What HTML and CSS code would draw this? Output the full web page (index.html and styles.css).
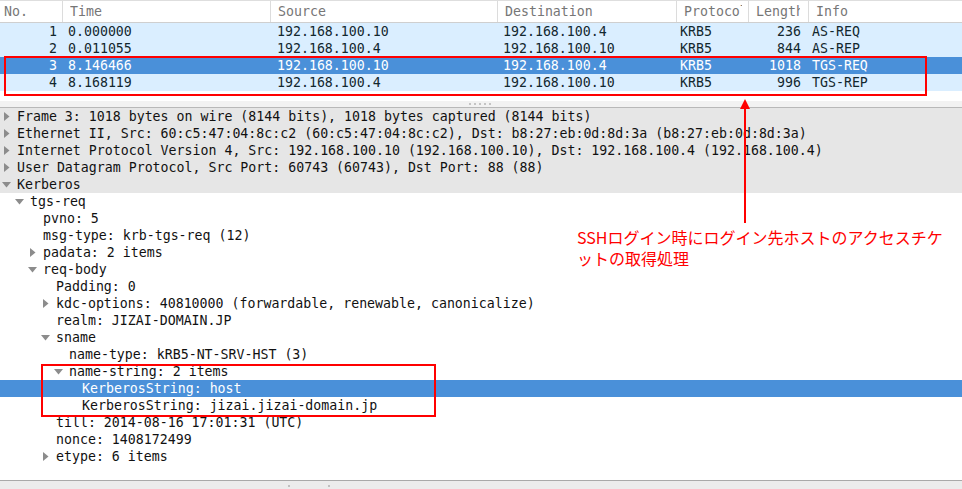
FILE: index.html
```html
<!DOCTYPE html>
<html lang="ja">
<head>
<meta charset="utf-8">
<title>Wireshark</title>
<link rel="stylesheet" href="styles.css">
</head>
<body>
<div class="app">
  <section class="plist">
    <div class="prow phead">
      <div class="c c-no"><span class="hl">No.</span></div>
      <div class="c c-time"><span class="hl">Time</span></div>
      <div class="c c-src"><span class="hl">Source</span></div>
      <div class="c c-dst"><span class="hl">Destination</span></div>
      <div class="c c-proto"><span class="hl">Protocol</span></div>
      <div class="c c-len"><span class="hl">Length</span></div>
      <div class="c c-info"><span class="hl">Info</span></div>
    </div>
    <div class="prow pdata">
      <div class="c c-no">1</div><div class="c c-time">0.000000</div><div class="c c-src">192.168.100.10</div><div class="c c-dst">192.168.100.4</div><div class="c c-proto">KRB5</div><div class="c c-len">236</div><div class="c c-info">AS-REQ</div>
    </div>
    <div class="prow pdata">
      <div class="c c-no">2</div><div class="c c-time">0.011055</div><div class="c c-src">192.168.100.4</div><div class="c c-dst">192.168.100.10</div><div class="c c-proto">KRB5</div><div class="c c-len">844</div><div class="c c-info">AS-REP</div>
    </div>
    <div class="prow pdata sel">
      <div class="c c-no">3</div><div class="c c-time">8.146466</div><div class="c c-src">192.168.100.10</div><div class="c c-dst">192.168.100.4</div><div class="c c-proto">KRB5</div><div class="c c-len">1018</div><div class="c c-info">TGS-REQ</div>
    </div>
    <div class="prow pdata">
      <div class="c c-no">4</div><div class="c c-time">8.168119</div><div class="c c-src">192.168.100.4</div><div class="c c-dst">192.168.100.10</div><div class="c c-proto">KRB5</div><div class="c c-len">996</div><div class="c c-info">TGS-REP</div>
    </div>
    <div class="pfill"></div>
  </section>

  <div class="splitter"><span class="grip"></span></div>

  <section class="tree">
    <div class="tr top l0"><span class="ex"><svg class="tri-r" viewBox="0 0 6 9"><polygon points="0,0 5.5,4.5 0,9"/></svg></span>Frame 3: 1018 bytes on wire (8144 bits), 1018 bytes captured (8144 bits)</div>
    <div class="tr top l0"><span class="ex"><svg class="tri-r" viewBox="0 0 6 9"><polygon points="0,0 5.5,4.5 0,9"/></svg></span>Ethernet II, Src: 60:c5:47:04:8c:c2 (60:c5:47:04:8c:c2), Dst: b8:27:eb:0d:8d:3a (b8:27:eb:0d:8d:3a)</div>
    <div class="tr top l0"><span class="ex"><svg class="tri-r" viewBox="0 0 6 9"><polygon points="0,0 5.5,4.5 0,9"/></svg></span>Internet Protocol Version 4, Src: 192.168.100.10 (192.168.100.10), Dst: 192.168.100.4 (192.168.100.4)</div>
    <div class="tr top l0"><span class="ex"><svg class="tri-r" viewBox="0 0 6 9"><polygon points="0,0 5.5,4.5 0,9"/></svg></span>User Datagram Protocol, Src Port: 60743 (60743), Dst Port: 88 (88)</div>
    <div class="tr top l0"><span class="ex"><svg class="tri-d" viewBox="0 0 9 6"><polygon points="0,0 9,0 4.5,5.5"/></svg></span>Kerberos</div>
    <div class="tr l1"><span class="ex"><svg class="tri-d" viewBox="0 0 9 6"><polygon points="0,0 9,0 4.5,5.5"/></svg></span>tgs-req</div>
    <div class="tr l2"><span class="ex"></span>pvno: 5</div>
    <div class="tr l2"><span class="ex"></span>msg-type: krb-tgs-req (12)</div>
    <div class="tr l2"><span class="ex"><svg class="tri-r" viewBox="0 0 6 9"><polygon points="0,0 5.5,4.5 0,9"/></svg></span>padata: 2 items</div>
    <div class="tr l2"><span class="ex"><svg class="tri-d" viewBox="0 0 9 6"><polygon points="0,0 9,0 4.5,5.5"/></svg></span>req-body</div>
    <div class="tr l3"><span class="ex"></span>Padding: 0</div>
    <div class="tr l3"><span class="ex"><svg class="tri-r" viewBox="0 0 6 9"><polygon points="0,0 5.5,4.5 0,9"/></svg></span>kdc-options: 40810000 (forwardable, renewable, canonicalize)</div>
    <div class="tr l3"><span class="ex"></span>realm: JIZAI-DOMAIN.JP</div>
    <div class="tr l3"><span class="ex"><svg class="tri-d" viewBox="0 0 9 6"><polygon points="0,0 9,0 4.5,5.5"/></svg></span>sname</div>
    <div class="tr l4"><span class="ex"></span>name-type: kRB5-NT-SRV-HST (3)</div>
    <div class="tr l4"><span class="ex"><svg class="tri-d" viewBox="0 0 9 6"><polygon points="0,0 9,0 4.5,5.5"/></svg></span>name-string: 2 items</div>
    <div class="tr l5 sel"><span class="ex"></span>KerberosString: host</div>
    <div class="tr l5"><span class="ex"></span>KerberosString: jizai.jizai-domain.jp</div>
    <div class="tr l3"><span class="ex"></span>till: 2014-08-16 17:01:31 (UTC)</div>
    <div class="tr l3"><span class="ex"></span>nonce: 1408172499</div>
    <div class="tr l3"><span class="ex"><svg class="tri-r" viewBox="0 0 6 9"><polygon points="0,0 5.5,4.5 0,9"/></svg></span>etype: 6 items</div>
  </section>

  <div class="bottombar"><span class="dot"></span><span class="dot"></span></div>

  <div class="mark mark-rows"></div>
  <div class="mark mark-names"></div>
  <svg class="arrow" viewBox="0 0 12 124" width="12" height="124">
    <polygon points="6,0 11,10 1,10" fill="#ff0000"/>
    <rect x="5" y="8" width="2" height="116" fill="#ff0000"/>
  </svg>
  <p class="note">SSHログイン時にログイン先ホストのアクセスチケ<br>ットの取得処理</p>
</div>
</body>
</html>
```

FILE: styles.css
```css
html, body {
  margin: 0;
  padding: 0;
  background: #ffffff;
}
body {
  font-family: "DejaVu Sans Mono", "Liberation Mono", monospace;
  font-size: 13.25px;
  color: #12272e;
  width: 962px;
  height: 489px;
  overflow: hidden;
}
.app {
  position: relative;
  width: 962px;
  height: 489px;
  display: flex;
  flex-direction: column;
}

/* packet list */
.plist {
  display: flex;
  flex-direction: column;
}
.prow {
  display: grid;
  grid-template-columns: 62px 208px 227px 179px 72px 60px 1fr;
  white-space: nowrap;
}
.phead {
  height: 21px;
  line-height: 21px;
  border-top: 1px solid #dedede;
  border-bottom: 1px solid #cfcfcf;
  color: #767676;
  background: #ffffff;
}
.phead .c {
  border-left: 1px solid #dcdcdc;
  padding-left: 7px;
  overflow: hidden;
}
.phead .c-no {
  border-left: none;
  padding-left: 4px;
}
.phead .hl {
  display: block;
  overflow: hidden;
}
.phead .c-proto .hl { width: 58px; }
.phead .c-len .hl { width: 44px; }

.pdata {
  height: 17px;
  line-height: 17px;
  background: #daeeff;
}
.pdata.sel {
  background: #4a90d9;
  color: #ffffff;
}
.pdata .c { overflow: hidden; }
.pdata .c-no { text-align: right; padding-right: 5px; }
.pdata .c-time { padding-left: 6px; }
.pdata .c-src { padding-left: 7px; }
.pdata .c-dst { padding-left: 6px; }
.pdata .c-proto { padding-left: 4px; }
.pdata .c-len { text-align: right; padding-right: 7px; }
.pdata .c-info { padding-left: 4px; }
.pfill { height: 10px; }

.splitter {
  height: 6px;
  background: #f2f2f2;
  border-bottom: 1px solid #b8b8b8;
  display: flex;
  justify-content: center;
  align-items: center;
}
.grip {
  width: 22px;
  height: 2px;
  margin-left: -2px;
  background: repeating-linear-gradient(90deg, #c4c4c4 0 2px, transparent 2px 5px);
}

/* details tree */
.tree {
  flex: 1;
  display: flex;
  flex-direction: column;
  color: #111111;
}
.tr {
  height: 17px;
  line-height: 17px;
  white-space: nowrap;
  display: flex;
  align-items: center;
}
.tr.top { background: #e6e6e6; }
.tr.sel { background: #4a90d9; color: #ffffff; }
.l0 { padding-left: 2px; }
.l1 { padding-left: 15px; }
.l2 { padding-left: 28px; }
.l3 { padding-left: 41px; }
.l4 { padding-left: 54px; }
.l5 { padding-left: 67px; }
.ex {
  width: 15px;
  height: 17px;
  flex: none;
  display: flex;
  align-items: center;
}
.tri-r {
  width: 6px;
  height: 9px;
  margin-left: 2px;
  fill: #8c8c8c;
}
.tri-d {
  width: 9px;
  height: 6px;
  margin-left: 0;
  fill: #8c8c8c;
}

.bottombar {
  height: 8px;
  background: #ececec;
  border-top: 1px solid #a9a9a9;
  display: flex;
  justify-content: center;
  align-items: flex-end;
  gap: 38px;
  padding-right: 344px;
}
.dot {
  width: 2px;
  height: 2px;
  background: #c0c0c0;
  margin-bottom: 2px;
}

/* annotations */
.mark {
  position: absolute;
  border: 2px solid #ff0000;
  box-sizing: border-box;
}
.mark-rows {
  left: 4px;
  top: 56px;
  width: 923px;
  height: 40px;
}
.mark-names {
  left: 41px;
  top: 364px;
  width: 395px;
  height: 53px;
}
.arrow {
  position: absolute;
  left: 739px;
  top: 99px;
}
.note {
  position: absolute;
  left: 577px;
  top: 227px;
  margin: 0;
  font-family: "Noto Sans CJK JP", "Noto Sans", sans-serif;
  font-size: 16px;
  line-height: 21px;
  color: #ff0000;
  white-space: nowrap;
}
```
